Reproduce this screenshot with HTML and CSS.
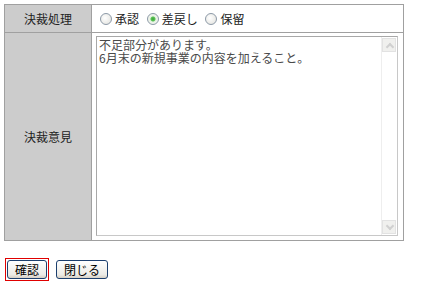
FILE: index.html
```html
<html>
    <head>
        <meta charset="utf-8" />
        <title>決裁</title>
        <link rel="stylesheet" href="styles.css">
    </head>
    <body>
        <table class="decision">
            <tbody>
                <tr class="row_action">
                    <td class="label">決裁処理</td>
                    <td class="value">
                        <label class="radio"><span class="dot"></span>承認</label>
                        <label class="radio"><span class="dot checked"></span>差戻し</label>
                        <label class="radio"><span class="dot"></span>保留</label>
                    </td>
                </tr>
                <tr class="row_comment">
                    <td class="label">決裁意見</td>
                    <td class="value">
                        <div class="memo">
                            <textarea class="memo_text">不足部分があります。
6月末の新規事業の内容を加えること。</textarea>
                            <div class="scroll">
                                <div class="scroll_btn up"></div>
                                <div class="scroll_track"></div>
                                <div class="scroll_btn down"></div>
                            </div>
                        </div>
                    </td>
                </tr>
            </tbody>
        </table>
        <div class="buttons">
            <span class="focus"><button class="btn">確認</button></span>
            <button class="btn">閉じる</button>
        </div>
    </body>
</html>
```

FILE: styles.css
```css
body {
    margin: 4px;
    font-family: "Noto Sans CJK JP", "DejaVu Sans", sans-serif;
    font-size: 12px;
    color: #222;
    background: #fff;
}

table.decision {
    border-collapse: collapse;
    width: 400px;
    border: 1px solid #a0a0a0;
    font-family: "Noto Sans CJK JP", "DejaVu Sans", sans-serif;
    font-size: 12px;
    color: #222;

    td {
        border: 1px solid #a0a0a0;
        padding: 0;
    }

    td.label {
        width: 86px;
        background-color: #cccccc;
        text-align: center;
    }

    tr.row_action {
        height: 28px;
    }

    tr.row_action td.value {
        padding-left: 8px;
        padding-top: 1px;
    }
}

.radio {
    display: inline-flex;
    align-items: center;
    margin-right: 5px;
}

.dot {
    display: inline-block;
    box-sizing: border-box;
    width: 12px;
    height: 12px;
    margin-right: 3px;
    border: 1px solid #8d9aa8;
    border-radius: 50%;
    background: radial-gradient(circle at 40% 40%, #ffffff 0%, #e6e6e2 80%);
}

.dot.checked {
    background: radial-gradient(circle, #3ea33a 0px, #59c255 2px, #e9f3e6 3px, #f4f4f0 6px);
}

.memo {
    display: flex;
    width: 302px;
    height: 200px;
    margin: 3px 0 4px 4px;
    box-sizing: border-box;
    border: 1px solid #a8a8a8;
    border-right-color: #c8c8c8;
    border-bottom-color: #c8c8c8;
    background: #fff;
}

.memo_text {
    flex: 1;
    border: 0;
    margin: 0;
    padding: 1px 2px;
    resize: none;
    outline: none;
    overflow: hidden;
    font-family: "Noto Sans CJK JP", "DejaVu Sans", sans-serif;
    font-size: 12px;
    line-height: 13px;
    color: #4a4a4a;
}

.scroll {
    display: flex;
    flex-direction: column;
    width: 14px;
    padding: 1px 1px 1px 0;
    border-left: 1px solid #eeeeee;
}

.scroll_btn {
    height: 14px;
    box-sizing: border-box;
    border: 1px solid #e2e2e2;
    background: #f0f0ee;
    position: relative;
}

.scroll_btn::after {
    content: "";
    position: absolute;
    left: 4px;
    width: 4px;
    height: 4px;
    border-left: 2px solid #d0d0d0;
    border-top: 2px solid #d0d0d0;
}

.scroll_btn.up::after {
    top: 5px;
    transform: rotate(45deg);
}

.scroll_btn.down::after {
    top: 2px;
    transform: rotate(225deg);
}

.scroll_track {
    flex: 1;
    background: #fff;
}

.buttons {
    display: flex;
    align-items: center;
    gap: 7px;
    margin-top: 17px;
    margin-left: 1px;
}

.focus {
    display: inline-block;
    padding: 1px;
    border: 1px solid #e00000;
}

.btn {
    height: 19px;
    padding: 0 7px;
    font-family: "Noto Sans CJK JP", "DejaVu Sans", sans-serif;
    font-size: 12px;
    line-height: 15px;
    color: #000;
    border: 1px solid #1c3f6e;
    border-radius: 3px;
    background: linear-gradient(#ffffff, #ecebe6 80%, #d6d0c5);
}
```
